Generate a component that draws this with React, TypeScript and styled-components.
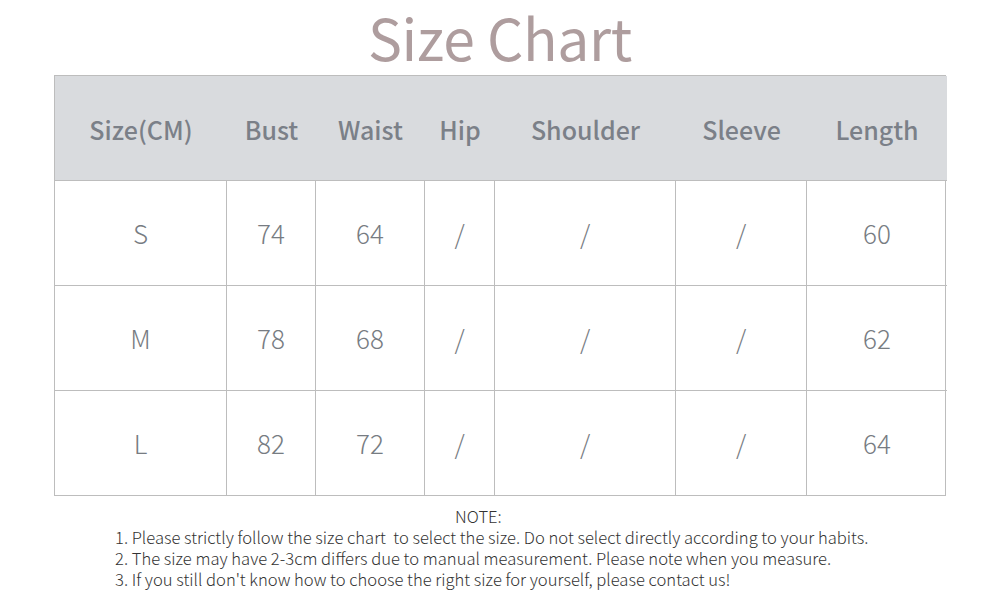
import React from "react";
import styled, { createGlobalStyle } from "styled-components";

const Global = createGlobalStyle`
  html, body { margin: 0; padding: 0; background: #ffffff; }
  body { font-family: "Noto Sans CJK SC", "Noto Sans", sans-serif; }
`;

const Page = styled.div`
  width: 1000px;
  height: 600px;
  display: flex;
  flex-direction: column;
  align-items: center;
  overflow: hidden;
`;

const Title = styled.h1`
  margin: 0;
  height: 75px;
  padding-bottom: 3px;
  box-sizing: border-box;
  font-size: 57px;
  line-height: 72px;
  font-weight: 400;
  color: #ae9d9e;
  letter-spacing: -0.3px;
`;

const Table = styled.div`
  width: 892px;
  display: grid;
  grid-template-columns: 172px 89px 109px 70px 181px 131px 140px;
  border: 1px solid #bdbdbd;
  box-sizing: border-box;
`;

const HeadCell = styled.div`
  height: 104px;
  padding-top: 1px;
  box-sizing: border-box;
  background: #d9dbde;
  display: flex;
  align-items: center;
  justify-content: center;
  font-size: 25px;
  font-weight: 500;
  color: #7b8088;
`;

const Cell = styled.div<{ $last?: boolean }>`
  height: 105px;
  padding-bottom: 1px;
  box-sizing: border-box;
  border-top: 1px solid #bdbdbd;
  border-right: ${(p) => (p.$last ? "none" : "1px solid #bdbdbd")};
  display: flex;
  align-items: center;
  justify-content: center;
  font-size: 26px;
  font-weight: 300;
  color: #777c82;
`;

const Notes = styled.div`
  align-self: flex-start;
  margin-left: 115px;
  margin-top: 10px;
  font-size: 16.6px;
  line-height: 21px;
  color: #333333;
  font-weight: 300;
`;

const NoteTitle = styled.div`
  padding-left: 340px;
`;

const headers = ["Size(CM)", "Bust", "Waist", "Hip", "Shoulder", "Sleeve", "Length"];
const rows = [
  ["S", "74", "64", "/", "/", "/", "60"],
  ["M", "78", "68", "/", "/", "/", "62"],
  ["L", "82", "72", "/", "/", "/", "64"],
];

export default function App() {
  return (
    <Page>
      <Global />
      <Title>Size Chart</Title>
      <Table>
        {headers.map((h) => (
          <HeadCell key={h}>{h}</HeadCell>
        ))}
        {rows.map((r, ri) =>
          r.map((c, ci) => (
            <Cell key={`${ri}-${ci}`} $last={ci === r.length - 1}>
              {c}
            </Cell>
          ))
        )}
      </Table>
      <Notes>
        <NoteTitle>NOTE:</NoteTitle>
        <div>1. Please strictly follow the size chart&nbsp; to select the size. Do not select directly according to your habits.</div>
        <div>2. The size may have 2-3cm differs due to manual measurement. Please note when you measure.</div>
        <div>3. If you still don't know how to choose the right size for yourself, please contact us!</div>
      </Notes>
    </Page>
  );
}
